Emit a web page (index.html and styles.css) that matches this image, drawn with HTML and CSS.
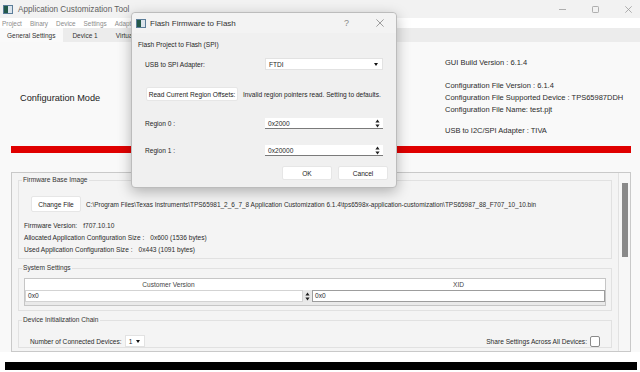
FILE: index.html
```html
<!DOCTYPE html>
<html lang="en">
<head>
    <meta charset="UTF-8">
    <meta name="viewport" content="width=device-width, initial-scale=1.0">
    <title>Application Customization Tool</title>
    <link rel="stylesheet" href="styles.css">
</head>
<body>
<div class="window">
    <div class="titlebar">
        <svg class="app-icon" viewBox="0 0 10 9"><rect x="0.5" y="0.5" width="9" height="8" fill="#dbe4ec" stroke="#5b7d99"/><rect x="1" y="1" width="4" height="7" fill="#23594a"/></svg>
        <span class="title">Application Customization Tool</span>
        <div class="winctrls">
            <svg viewBox="0 0 7 7"><path d="M0 3.5h7" stroke="#9c9c9c" stroke-width="0.8"/></svg>
            <svg viewBox="0 0 7 7"><rect x="0.5" y="0.5" width="6" height="6" rx="0.8" fill="none" stroke="#9c9c9c" stroke-width="0.8"/></svg>
            <svg viewBox="0 0 7 7"><path d="M0.3 0.3l6.4 6.4M6.7 0.3l-6.4 6.4" stroke="#9c9c9c" stroke-width="0.8"/></svg>
        </div>
    </div>

    <div class="menubar">
        <span>Project</span><span>Binary</span><span>Device</span><span>Settings</span><span>Adapter</span>
    </div>

    <div class="tabs">
        <div class="tab active">General Settings</div>
        <div class="tab">Device 1</div>
        <div class="tab">Virtual</div>
    </div>

    <div class="header">
        <div class="mode">Configuration Mode</div>
        <div class="info">
            <p>GUI Build Version : 6.1.4</p>
            <div class="info-group">
                <p>Configuration File Version : 6.1.4</p>
                <p>Configuration File Supported Device : TPS65987DDH</p>
                <p>Configuration File Name: test.pjt</p>
            </div>
            <p class="info-usb">USB to I2C/SPI Adapter : TIVA</p>
        </div>
    </div>
    <div class="redbar"></div>

    <div class="panel">
        <div class="scroll-content">
            <fieldset class="group">
                <legend>Firmware Base Image</legend>
                <div class="file-row">
                    <button type="button" class="btn btn-change">Change File</button>
                    <span class="path">C:\Program Files\Texas Instruments\TPS65981_2_6_7_8 Application Customization 6.1.4\tps6598x-application-customization\TPS65987_88_F707_10_10.bin</span>
                </div>
                <div class="fw-info">
                    <div><span>Firmware Version:</span><span class="v">f707.10.10</span></div>
                    <div><span>Allocated Application Configuration Size :</span><span class="v">0x600 (1536 bytes)</span></div>
                    <div><span>Used Application Configuration Size :</span><span class="v">0x443 (1091 bytes)</span></div>
                </div>
            </fieldset>

            <fieldset class="group">
                <legend>System Settings</legend>
                <div class="table">
                    <div class="thead">
                        <div>Customer Version</div>
                        <div>XID</div>
                    </div>
                    <div class="trow">
                        <div class="cell-input in-left">0x0</div>
                        <div class="spin">
                            <svg viewBox="0 0 5 9"><path d="M2.5 0.5L4.6 3.6H0.4z M2.5 8.5L4.6 5.4H0.4z" fill="#222"/></svg>
                        </div>
                        <div class="cell-input in-right">0x0</div>
                    </div>
                </div>
            </fieldset>

            <fieldset class="group">
                <legend>Device Initialization Chain</legend>
                <div class="chain-row">
                    <span>Number of Connected Devices:</span>
                    <div class="combo combo-small">1<span class="caret"></span></div>
                    <div class="share">
                        <span>Share Settings Across All Devices:</span>
                        <span class="checkbox"></span>
                    </div>
                </div>
            </fieldset>
        </div>
        <div class="vscroll"><div class="thumb"></div></div>
    </div>

    <div class="footer"><div class="statusbar"></div></div>

    <div class="dialog">
        <div class="dlg-title">
            <svg class="app-icon" viewBox="0 0 10 9"><rect x="0.5" y="0.5" width="9" height="8" fill="#dbe4ec" stroke="#5b7d99"/><rect x="1" y="1" width="4" height="7" fill="#23594a"/></svg>
            <span class="dlg-caption">Flash Firmware to Flash</span>
            <span class="dlg-help">?</span>
            <svg class="dlg-close" viewBox="0 0 8 8"><path d="M0.4 0.4l7.2 7.2M7.6 0.4l-7.2 7.2" stroke="#777" stroke-width="0.7"/></svg>
        </div>
        <div class="dlg-heading">Flash Project to Flash (SPI)</div>
        <div class="dlg-row row-usb">
            <span class="dlg-label">USB to SPI Adapter:</span>
            <div class="combo combo-wide">FTDI<span class="caret"></span></div>
        </div>
        <div class="dlg-row row-read">
            <button type="button" class="btn btn-read">Read Current Region Offsets:</button>
            <span class="read-msg">Invalid region pointers read. Setting to defaults.</span>
        </div>
        <div class="dlg-row row-region0">
            <span class="dlg-label">Region 0 :</span>
            <div class="spinbox">0x2000<svg viewBox="0 0 5 9"><path d="M2.5 0.5L4.6 3.6H0.4z M2.5 8.5L4.6 5.4H0.4z" fill="#222"/></svg></div>
        </div>
        <div class="dlg-row row-region1">
            <span class="dlg-label">Region 1 :</span>
            <div class="spinbox">0x20000<svg viewBox="0 0 5 9"><path d="M2.5 0.5L4.6 3.6H0.4z M2.5 8.5L4.6 5.4H0.4z" fill="#222"/></svg></div>
        </div>
        <div class="dlg-buttons">
            <button type="button" class="btn btn-dlg">OK</button>
            <button type="button" class="btn btn-dlg">Cancel</button>
        </div>
    </div>
</div>
</body>
</html>
```

FILE: styles.css
```css
* { box-sizing: border-box; }
body { margin: 0; font-family: "Liberation Sans", Arial, sans-serif; }
p { margin: 0; }

.window { position: relative; width: 640px; height: 372px; overflow: hidden; background: #f9f9f9; color: #2b2b2b; font-size: 6.6px; display: flex; flex-direction: column; }

/* window chrome */
.titlebar { height: 18px; flex: none; display: flex; align-items: center; padding-left: 3px; background: #f2f2f2; }
.app-icon { width: 10px; height: 9px; margin-right: 5px; flex: none; }
.title { font-size: 8.2px; color: #606060; }
.winctrls { margin-left: auto; margin-right: 8px; display: flex; gap: 26px; }
.winctrls svg { width: 7px; height: 7px; display: block; }
.menubar { height: 10px; flex: none; background: #fff; display: flex; align-items: center; gap: 8px; padding-left: 2px; font-size: 6.4px; color: #8c8c8c; }
.tabs { height: 14px; flex: none; background: #ececec; display: flex; font-size: 6.5px; }
.tab { padding: 0 9px; display: flex; align-items: center; color: #333; }
.tab.active { background: #fafafa; padding: 0 8px 0 7px; }

/* header */
.header { height: 104px; flex: none; display: grid; grid-template-columns: 445px 1fr; }
.mode { padding: 51px 0 0 20px; font-size: 9.2px; line-height: 10px; color: #222; }
.info { padding-top: 15px; font-size: 7.5px; line-height: 12px; color: #2b2b2b; }
.info-group { margin-top: 11px; }
.info-usb { margin-top: 9px; }
.redbar { height: 7px; flex: none; margin: 0 9px 0 11px; background: #e00000; }

/* main panel */
.panel { height: 180px; flex: none; margin: 19px 9px 0 11px; border: 1px solid #c9c9c9; background: #f4f4f4; display: flex; }
.scroll-content { flex: 1; min-width: 0; padding: 3px 6px 0; overflow: hidden; }
.vscroll { width: 12px; flex: none; border-left: 1px solid #e2e2e2; background: #f7f7f7; padding: 10px 0 0 3px; }
.thumb { width: 6px; height: 74px; background: #8a8a8a; }

.group { margin: 0; padding: 0; border: 1px solid #e1e1e1; min-width: 0; }
.group + .group { margin-top: 5px; }
.group legend { margin-left: 3px; padding: 0 1px; line-height: 8px; color: #333; }

.btn { font: inherit; font-size: 6.6px; color: #222; background: #fff; border: 1px solid #e6e6e6; padding: 0; border-radius: 2px; }
.file-row { display: flex; align-items: center; height: 16px; margin: 12px 0 0 12px; }
.btn-change { width: 50px; height: 16px; }
.path { margin-left: 5px; white-space: nowrap; font-size: 6.45px; }
.fw-info { margin: 8px 0 2px 5px; line-height: 12px; }
.fw-info .v { margin-left: 6px; }

.table { margin: 6px 5px 4px; border: 1px solid #c6c6c6; background: #eaeaea; padding-bottom: 3px; }
.thead { display: grid; grid-template-columns: 287px 1fr; height: 11px; background: #fff; color: #444; }
.thead div { text-align: center; line-height: 11px; }
.trow { display: flex; height: 12px; }
.cell-input { background: #fff; border: 1px solid #d3d3d3; padding-left: 2px; line-height: 10px; }
.in-left { width: 278px; }
.in-right { flex: 1; margin-left: 1px; border-color: #9d9d9d; }
.spin { width: 8px; display: flex; align-items: center; justify-content: center; background: #e8e8e8; }
.spin svg { width: 5px; height: 9px; }

.chain-row { display: flex; align-items: center; height: 12px; margin: 11px 11px 0; }
.combo { background: #fff; border: 1px solid #e2e2e2; display: flex; align-items: center; padding: 0 4px 0 3px; }
.combo-small { width: 20px; height: 12px; margin-left: 3px; }
.caret { margin-left: auto; width: 0; height: 0; border-left: 2px solid transparent; border-right: 2px solid transparent; border-top: 3px solid #111; }
.share { margin-left: auto; display: flex; align-items: center; gap: 3px; }
.checkbox { width: 10px; height: 11px; border: 1px solid #8a8a8a; border-radius: 2px; background: #fff; }

.footer { flex: 1; background: #fff; padding: 10px 3px 0 5px; }
.statusbar { height: 8px; background: #000; }

/* dialog */
.dialog { position: absolute; left: 131px; top: 12px; width: 266px; height: 176px; background: #f0f0f0; border: 1px solid #bcbcbc; border-radius: 4px; box-shadow: 0 4px 14px rgba(0, 0, 0, 0.28); display: flex; flex-direction: column; color: #1f1f1f; }
.dlg-title { height: 20px; flex: none; display: flex; align-items: center; padding-left: 4px; background: #f3f3f3; border-radius: 4px 4px 0 0; }
.dlg-title .app-icon { margin-right: 4px; }
.dlg-caption { font-size: 8px; color: #333; }
.dlg-help { margin-left: auto; font-size: 9px; color: #888; }
.dlg-close { width: 8px; height: 8px; margin: 0 12px 0 27px; }
.dlg-heading { margin: 8px 0 0 6px; line-height: 8px; }
.dlg-row { display: flex; align-items: center; padding-left: 13px; }
.dlg-label { width: 120px; flex: none; }
.row-usb { margin-top: 9px; height: 12px; }
.combo-wide { width: 118px; height: 12px; }
.row-read { margin-top: 17px; height: 14px; }
.btn-read { width: 92px; height: 14px; margin-left: 1px; }
.read-msg { margin-left: 5px; white-space: nowrap; }
.row-region0 { margin-top: 17px; height: 11px; }
.row-region1 { margin-top: 16px; height: 11px; }
.spinbox { width: 118px; height: 11px; background: #fff; border-bottom: 1px solid #7a7a7a; display: flex; align-items: center; padding-left: 3px; }
.spinbox svg { width: 5px; height: 9px; margin-left: auto; margin-right: 3px; }
.dlg-buttons { margin-top: 10px; height: 14px; display: flex; justify-content: flex-end; gap: 6px; padding-right: 8px; }
.btn-dlg { width: 50px; height: 14px; }
```
